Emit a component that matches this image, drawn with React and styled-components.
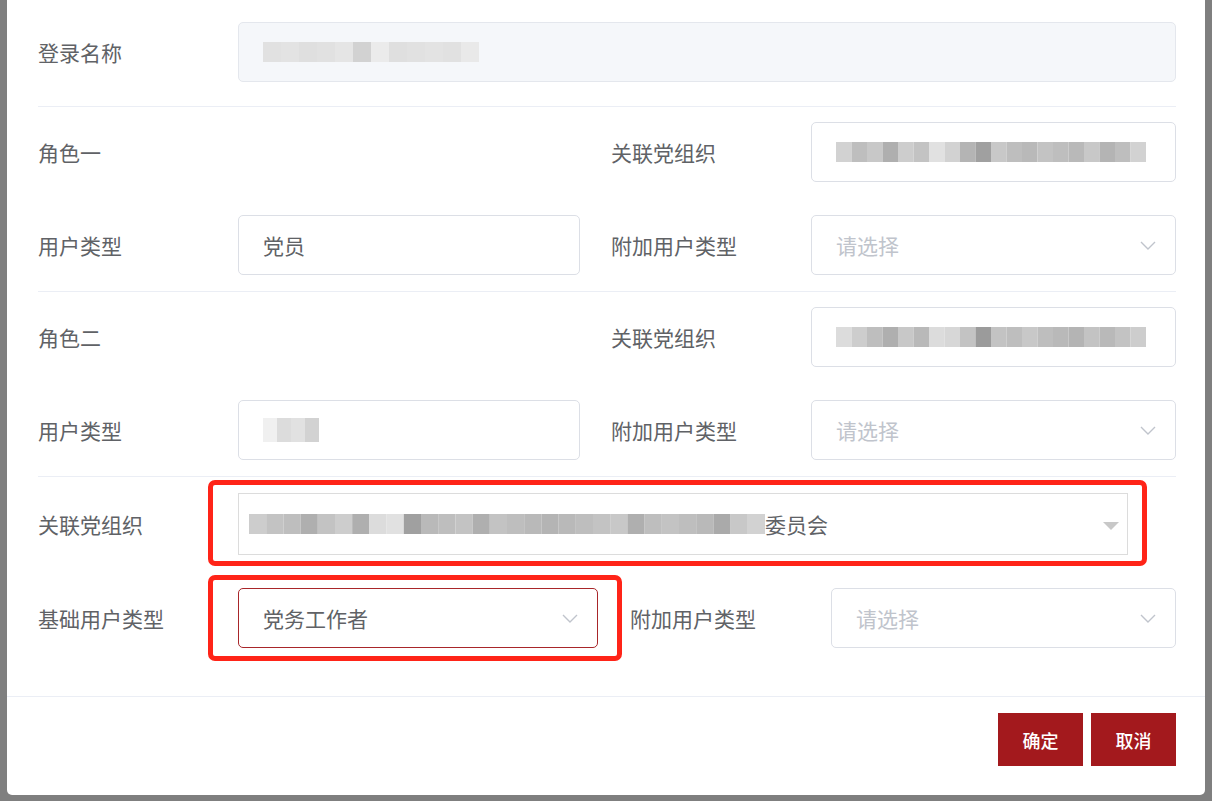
import React from "react";
import styled, { createGlobalStyle } from "styled-components";

const GlobalStyle = createGlobalStyle`
  html, body {
    margin: 0;
    padding: 0;
    background: #7f7f7f;
    font-family: "Noto Sans CJK SC", "Noto Sans", sans-serif;
    overflow: hidden;
  }
`;

const Overlay = styled.div`
  width: 1212px;
  height: 801px;
  background: #7f7f7f;
`;

const Dialog = styled.div`
  margin-left: 7px;
  width: 1198px;
  height: 795px;
  background: #fff;
  border-radius: 0 0 5px 5px;
  display: flex;
  flex-direction: column;
`;

const Body = styled.div`
  flex: 1;
  padding: 22px 29px 0 31px;
`;

const Section = styled.div`
  display: flex;
  flex-direction: column;
  gap: ${(p) => p.gap || 33}px;
  padding: ${(p) => p.pad || "15px 0 16px"};
  border-bottom: ${(p) => (p.last ? "none" : "1px solid #ebeef5")};
`;

const Row = styled.div`
  display: flex;
  align-items: center;
  gap: ${(p) => p.gap || 31}px;
`;

const FormItem = styled.div`
  display: flex;
  align-items: center;
  width: ${(p) => (p.width ? `${p.width}px` : "auto")};
  flex: ${(p) => (p.width ? "none" : "1 1 0")};
  height: ${(p) => p.height || 60}px;
`;

const Label = styled.div`
  width: ${(p) => p.width || 200}px;
  flex: none;
  font-size: 21px;
  color: #606266;
  line-height: 1;
`;

const Input = styled.div`
  position: relative;
  flex: 1;
  height: 100%;
  box-sizing: border-box;
  display: flex;
  align-items: center;
  padding: 0 24px;
  border: 1px solid ${(p) => (p.active ? "#a8262a" : "#dcdfe6")};
  border-radius: ${(p) => (p.square ? 0 : 5)}px;
  background: ${(p) => (p.disabled ? "#f5f7fa" : "#fff")};
  font-size: 21px;
  color: #606266;
  ${(p) => p.disabled && "border-color: #e4e7ed;"}
  ${(p) => p.square && "border-color: #dcdcdc; padding-left: 10px; padding-right: 8px;"}
`;

const Placeholder = styled.span`
  color: #c0c4cc;
`;

const Value = styled.span`
  flex: 1;
  display: flex;
  align-items: center;
  white-space: nowrap;
  overflow: hidden;
`;

const Arrow = styled.svg`
  flex: none;
  margin-left: auto;
  margin-right: -6px;
  width: 18px;
  height: 18px;
`;

const Caret = styled.div`
  flex: none;
  margin-left: auto;
  margin-top: 4px;
  width: 0;
  height: 0;
  border-left: 8px solid transparent;
  border-right: 8px solid transparent;
  border-top: 8px solid #c8c8c8;
`;

const Highlight = styled.div`
  position: absolute;
  top: ${(p) => p.t}px;
  bottom: ${(p) => p.b}px;
  left: ${(p) => p.l}px;
  right: ${(p) => p.r}px;
  border: 5px solid #ff2418;
  border-radius: 7px;
  pointer-events: none;
`;

const Footer = styled.div`
  border-top: 1px solid #ebeef5;
  padding: 16px 29px 29px 0;
  display: flex;
  justify-content: flex-end;
  gap: 8px;
`;

const Button = styled.button`
  width: 85px;
  height: 53px;
  border: none;
  border-radius: 0;
  background: #a3191d;
  color: #fff;
  font-family: "Noto Sans CJK SC", sans-serif;
  font-size: 18px;
  font-weight: 500;
  cursor: pointer;
`;

const Mosaic = ({ cells, h = 20, size = 18, tone = 190 }) => (
  <svg width={cells.length * size} height={h + 8} style={{ flex: "none" }}>
    {cells.map((c, i) => {
      const v = Math.min(245, tone + c);
      return (
        <rect
          key={i}
          x={i * size}
          y={4}
          width={size}
          height={h}
          fill={`rgb(${v},${v},${v})`}
        />
      );
    })}
  </svg>
);

const ChevronDown = () => (
  <Arrow viewBox="0 0 18 18" fill="none">
    <path d="M2 6 L9 13 L16 6" stroke="#c0c4cc" strokeWidth="1.4" />
  </Arrow>
);

const orgCells = [30, 10, 20, -5, 25, 15, 45, 30, 0, -20, 20, 10, 5, 15, 10, 5, 20, 0, 10, 30];
const org2Cells = [40, 25, 10, -5, 20, 5, 40, 35, 15, -25, 15, 10, 20, 10, 5, 0, 15, 5, 15, 25];
const bigCells = [
  20, 10, 5, -10, 10, 20, -10, 35, 40, -25, 0, 5, 10, -10, 10, 5, 0, -5, 0, 5,
  10, 15, -10, 5, 10, 5, 0, -15, 15, 25,
];

export default function App() {
  return (
    <Overlay>
      <GlobalStyle />
      <Dialog>
        <Body>
          <Section pad="0 0 24px">
            <Row>
              <FormItem>
                <Label>登录名称</Label>
                <Input disabled>
                  <Mosaic cells={[10, 12, 8, 10, 14, -5, 20, 8, 10, 12, 10, 18]} tone={215} />
                </Input>
              </FormItem>
            </Row>
          </Section>

          <Section>
            <Row>
              <FormItem width={542}>
                <Label>角色一</Label>
              </FormItem>
              <FormItem>
                <Label>关联党组织</Label>
                <Input>
                  <Value>
                    <Mosaic cells={orgCells} tone={180} size={15.5} />
                  </Value>
                </Input>
              </FormItem>
            </Row>
            <Row>
              <FormItem width={542}>
                <Label>用户类型</Label>
                <Input>党员</Input>
              </FormItem>
              <FormItem>
                <Label>附加用户类型</Label>
                <Input>
                  <Placeholder>请选择</Placeholder>
                  <ChevronDown />
                </Input>
              </FormItem>
            </Row>
          </Section>

          <Section>
            <Row>
              <FormItem width={542}>
                <Label>角色二</Label>
              </FormItem>
              <FormItem>
                <Label>关联党组织</Label>
                <Input>
                  <Value>
                    <Mosaic cells={org2Cells} tone={180} size={15.5} />
                  </Value>
                </Input>
              </FormItem>
            </Row>
            <Row>
              <FormItem width={542}>
                <Label>用户类型</Label>
                <Input>
                  <Mosaic cells={[40, 20, 25, 10]} tone={200} size={14} h={24} />
                </Input>
              </FormItem>
              <FormItem>
                <Label>附加用户类型</Label>
                <Input>
                  <Placeholder>请选择</Placeholder>
                  <ChevronDown />
                </Input>
              </FormItem>
            </Row>
          </Section>

          <Section pad="16px 0 47px" gap={33} last>
            <Row>
              <FormItem width={1090} height={62}>
                <Label>关联党组织</Label>
                <Input square>
                  <Highlight t={-14} b={-12} l={-31} r={-20} />
                  <Value>
                    <Mosaic cells={bigCells} tone={185} size={17.2} />
                    委员会
                  </Value>
                  <Caret />
                </Input>
              </FormItem>
            </Row>
            <Row gap={32}>
              <FormItem width={560}>
                <Label>基础用户类型</Label>
                <Input active>
                  <Highlight t={-14} b={-14} l={-31} r={-25} />
                  党务工作者
                  <ChevronDown />
                </Input>
              </FormItem>
              <FormItem>
                <Label width={201}>附加用户类型</Label>
                <Input>
                  <Placeholder>请选择</Placeholder>
                  <ChevronDown />
                </Input>
              </FormItem>
            </Row>
          </Section>
        </Body>
        <Footer>
          <Button>确定</Button>
          <Button>取消</Button>
        </Footer>
      </Dialog>
    </Overlay>
  );
}
